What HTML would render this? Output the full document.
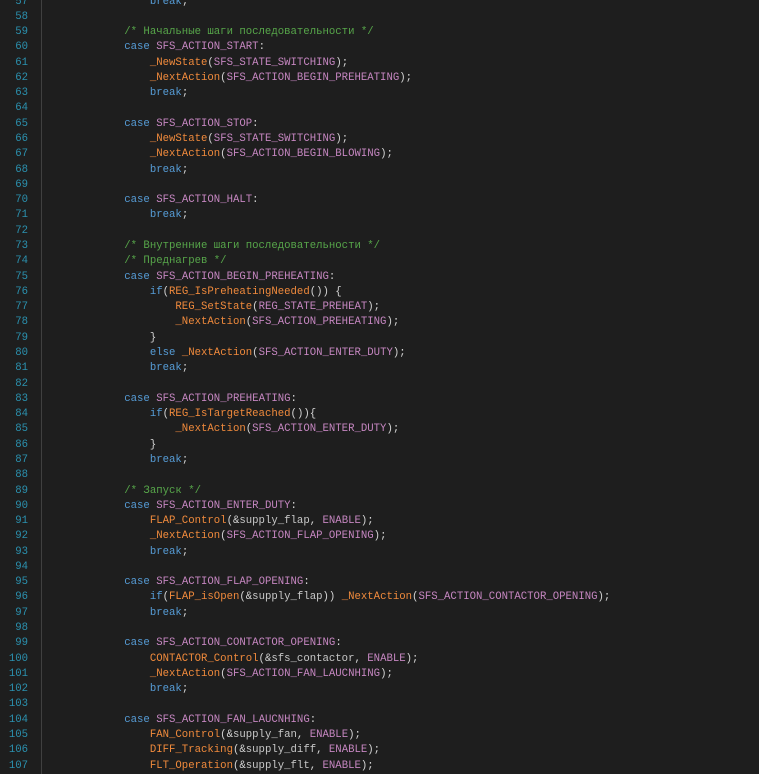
<!DOCTYPE html>
<html><head><meta charset="utf-8"><style>
html,body{margin:0;padding:0;background:#1e1e1e;width:759px;height:774px;overflow:hidden}
#wrap{position:absolute;top:-5.5px;left:0;font-family:"Liberation Mono","DejaVu Sans Mono",monospace;font-size:10.66px;line-height:15.28px;white-space:pre}
#nums{position:absolute;top:0;left:0;width:28px;text-align:right;color:#2b91af}
#code{position:absolute;top:0;left:47.5px;color:#d4d4d4}
#guide{position:absolute;left:41px;top:0;width:1px;height:774px;background:#404040}
.k{color:#569cd6}.m{color:#c586c0}.f{color:#f08a3c}.c{color:#57a64a}.v{color:#c8c8c8}
</style></head><body>
<div id="guide"></div>
<div id="wrap"><div id="nums">57
58
59
60
61
62
63
64
65
66
67
68
69
70
71
72
73
74
75
76
77
78
79
80
81
82
83
84
85
86
87
88
89
90
91
92
93
94
95
96
97
98
99
100
101
102
103
104
105
106
107</div><div id="code">                <span class="k">break</span>;

            <span class="c">/* Начальные шаги последовательности */</span>
            <span class="k">case</span> <span class="m">SFS_ACTION_START</span>:
                <span class="f">_NewState</span>(<span class="m">SFS_STATE_SWITCHING</span>);
                <span class="f">_NextAction</span>(<span class="m">SFS_ACTION_BEGIN_PREHEATING</span>);
                <span class="k">break</span>;

            <span class="k">case</span> <span class="m">SFS_ACTION_STOP</span>:
                <span class="f">_NewState</span>(<span class="m">SFS_STATE_SWITCHING</span>);
                <span class="f">_NextAction</span>(<span class="m">SFS_ACTION_BEGIN_BLOWING</span>);
                <span class="k">break</span>;

            <span class="k">case</span> <span class="m">SFS_ACTION_HALT</span>:
                <span class="k">break</span>;

            <span class="c">/* Внутренние шаги последовательности */</span>
            <span class="c">/* Преднагрев */</span>
            <span class="k">case</span> <span class="m">SFS_ACTION_BEGIN_PREHEATING</span>:
                <span class="k">if</span>(<span class="f">REG_IsPreheatingNeeded</span>()) {
                    <span class="f">REG_SetState</span>(<span class="m">REG_STATE_PREHEAT</span>);
                    <span class="f">_NextAction</span>(<span class="m">SFS_ACTION_PREHEATING</span>);
                }
                <span class="k">else</span> <span class="f">_NextAction</span>(<span class="m">SFS_ACTION_ENTER_DUTY</span>);
                <span class="k">break</span>;

            <span class="k">case</span> <span class="m">SFS_ACTION_PREHEATING</span>:
                <span class="k">if</span>(<span class="f">REG_IsTargetReached</span>()){
                    <span class="f">_NextAction</span>(<span class="m">SFS_ACTION_ENTER_DUTY</span>);
                }
                <span class="k">break</span>;

            <span class="c">/* Запуск */</span>
            <span class="k">case</span> <span class="m">SFS_ACTION_ENTER_DUTY</span>:
                <span class="f">FLAP_Control</span>(&amp;<span class="v">supply_flap</span>, <span class="m">ENABLE</span>);
                <span class="f">_NextAction</span>(<span class="m">SFS_ACTION_FLAP_OPENING</span>);
                <span class="k">break</span>;

            <span class="k">case</span> <span class="m">SFS_ACTION_FLAP_OPENING</span>:
                <span class="k">if</span>(<span class="f">FLAP_isOpen</span>(&amp;<span class="v">supply_flap</span>)) <span class="f">_NextAction</span>(<span class="m">SFS_ACTION_CONTACTOR_OPENING</span>);
                <span class="k">break</span>;

            <span class="k">case</span> <span class="m">SFS_ACTION_CONTACTOR_OPENING</span>:
                <span class="f">CONTACTOR_Control</span>(&amp;<span class="v">sfs_contactor</span>, <span class="m">ENABLE</span>);
                <span class="f">_NextAction</span>(<span class="m">SFS_ACTION_FAN_LAUCNHING</span>);
                <span class="k">break</span>;

            <span class="k">case</span> <span class="m">SFS_ACTION_FAN_LAUCNHING</span>:
                <span class="f">FAN_Control</span>(&amp;<span class="v">supply_fan</span>, <span class="m">ENABLE</span>);
                <span class="f">DIFF_Tracking</span>(&amp;<span class="v">supply_diff</span>, <span class="m">ENABLE</span>);
                <span class="f">FLT_Operation</span>(&amp;<span class="v">supply_flt</span>, <span class="m">ENABLE</span>);</div></div>
</body></html>
